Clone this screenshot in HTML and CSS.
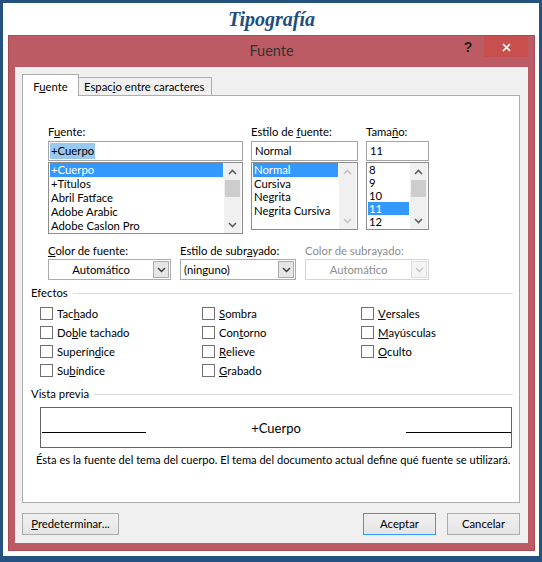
FILE: index.html
```html
<!DOCTYPE html>
<html lang="es">
<head>
<meta charset="utf-8">
<title>Tipografía</title>
<link rel="stylesheet" href="styles.css">
</head>
<body>
<div class="frame">
  <h1 class="page-title">Tipografía</h1>
  <div class="dialog">
    <div class="titlebar">
      <span></span>
      <span class="titlebar-text">Fuente</span>
      <div class="titlebar-ctrls">
        <span class="help">?</span>
        <span class="close"><svg width="9" height="9" viewBox="0 0 9 9"><path d="M1 1 L8 8 M8 1 L1 8" stroke="#fff" stroke-width="1.6" fill="none"/></svg></span>
      </div>
    </div>
    <div class="content">
      <div class="tabs">
        <div class="tab active">F<u>u</u>ente</div>
        <div class="tab">Espac<u>i</u>o entre caracteres</div>
      </div>
      <div class="panel">
        <div class="font-row">
          <div class="col col-font">
            <div class="label">F<u>u</u>ente:</div>
            <div class="input"><span class="sel">+Cuerpo</span></div>
            <div class="list list-font">
              <ul class="items">
                <li class="on">+Cuerpo</li>
                <li>+Títulos</li>
                <li>Abril Fatface</li>
                <li>Adobe Arabic</li>
                <li>Adobe Caslon Pro</li>
              </ul>
              <div class="scrollbar">
                <span class="arrow"><svg width="9" height="6" viewBox="0 0 9 6"><path d="M1 5 L4.5 1.5 L8 5" stroke="#606060" stroke-width="1.6" fill="none"/></svg></span>
                <span class="track"><span class="thumb"></span></span>
                <span class="arrow"><svg width="9" height="6" viewBox="0 0 9 6"><path d="M1 1 L4.5 4.5 L8 1" stroke="#606060" stroke-width="1.6" fill="none"/></svg></span>
              </div>
            </div>
          </div>
          <div class="col col-style">
            <div class="label">Estilo de <u>f</u>uente:</div>
            <div class="input"><span class="plain">Normal</span></div>
            <div class="list list-style">
              <ul class="items">
                <li class="on">Normal</li>
                <li>Cursiva</li>
                <li>Negrita</li>
                <li>Negrita Cursiva</li>
              </ul>
              <div class="scrollbar disabled">
                <span class="arrow"><svg width="9" height="6" viewBox="0 0 9 6"><path d="M1 5 L4.5 1.5 L8 5" stroke="#c4c4c4" stroke-width="1.6" fill="none"/></svg></span>
                <span class="track"></span>
                <span class="arrow"><svg width="9" height="6" viewBox="0 0 9 6"><path d="M1 1 L4.5 4.5 L8 1" stroke="#c4c4c4" stroke-width="1.6" fill="none"/></svg></span>
              </div>
            </div>
          </div>
          <div class="col col-size">
            <div class="label">Tama<u>ñ</u>o:</div>
            <div class="input"><span class="plain">11</span></div>
            <div class="list list-size">
              <ul class="items">
                <li>8</li>
                <li>9</li>
                <li>10</li>
                <li class="on">11</li>
                <li>12</li>
              </ul>
              <div class="scrollbar">
                <span class="arrow"><svg width="9" height="6" viewBox="0 0 9 6"><path d="M1 5 L4.5 1.5 L8 5" stroke="#606060" stroke-width="1.6" fill="none"/></svg></span>
                <span class="track"><span class="thumb"></span></span>
                <span class="arrow"><svg width="9" height="6" viewBox="0 0 9 6"><path d="M1 1 L4.5 4.5 L8 1" stroke="#606060" stroke-width="1.6" fill="none"/></svg></span>
              </div>
            </div>
          </div>
        </div>

        <div class="select-row">
          <div class="scol scol-1">
            <div class="label"><u>C</u>olor de fuente:</div>
            <div class="select"><span class="value center">Automático</span><span class="dbtn"><svg width="9" height="6" viewBox="0 0 9 6"><path d="M1 1 L4.5 4.5 L8 1" stroke="#404040" stroke-width="1.5" fill="none"/></svg></span></div>
          </div>
          <div class="scol scol-2">
            <div class="label">Estilo de subr<u>a</u>yado:</div>
            <div class="select"><span class="value">(ninguno)</span><span class="dbtn"><svg width="9" height="6" viewBox="0 0 9 6"><path d="M1 1 L4.5 4.5 L8 1" stroke="#404040" stroke-width="1.5" fill="none"/></svg></span></div>
          </div>
          <div class="scol scol-3">
            <div class="label disabled">Color de subrayado:</div>
            <div class="select disabled"><span class="value center">Automático</span><span class="dbtn"><svg width="9" height="6" viewBox="0 0 9 6"><path d="M1 1 L4.5 4.5 L8 1" stroke="#c4c4c4" stroke-width="1.5" fill="none"/></svg></span></div>
          </div>
        </div>

        <div class="group-head"><span>Efectos</span><span class="rule"></span></div>
        <div class="effects">
          <div class="check"><span class="box"></span>Tac<u>h</u>ado</div>
          <div class="check"><span class="box"></span>Do<u>b</u>le tachado</div>
          <div class="check"><span class="box"></span>Superín<u>d</u>ice</div>
          <div class="check"><span class="box"></span>Su<u>b</u>índice</div>
          <div class="check"><span class="box"></span><u>S</u>ombra</div>
          <div class="check"><span class="box"></span>Con<u>t</u>orno</div>
          <div class="check"><span class="box"></span><u>R</u>elieve</div>
          <div class="check"><span class="box"></span><u>G</u>rabado</div>
          <div class="check"><span class="box"></span><u>V</u>ersales</div>
          <div class="check"><span class="box"></span><u>M</u>ayúsculas</div>
          <div class="check"><span class="box"></span><u>O</u>culto</div>
        </div>

        <div class="group-head preview-head"><span>Vista previa</span><span class="rule"></span></div>
        <div class="preview">
          <span class="pline"></span>
          <span class="ptext">+Cuerpo</span>
          <span class="pline pline-r"></span>
        </div>
        <p class="caption">Ésta es la fuente del tema del cuerpo. El tema del documento actual define qué fuente se utilizará.</p>
      </div>

      <div class="buttons">
        <span class="button btn-pre"><u>P</u>redeterminar...</span>
        <span class="button btn-ok">Aceptar</span>
        <span class="button btn-cancel">Cancelar</span>
      </div>
    </div>
  </div>
</div>
</body>
</html>
```

FILE: styles.css
```css
* { box-sizing: border-box; }

html, body { margin: 0; padding: 0; }

body {
  width: 542px;
  height: 562px;
  border: 3px solid #245180;
  border-bottom-width: 6px;
  background: #ffffff;
  font-family: Lato, "Liberation Sans", sans-serif;
  font-size: 11.3px;
  color: #000000;
  overflow: hidden;
}

.frame {
  padding: 0 4px 0 5px;
}

.page-title {
  margin: 0;
  height: 32px;
  line-height: 32px;
  text-align: center;
  font-family: "Liberation Serif", serif;
  font-style: italic;
  font-weight: bold;
  font-size: 20px;
  color: #1f4e7d;
}

.dialog {
  background: #bd5b65;
  border: 1px solid #a94a54;
  padding: 0 6px 7px;
}

.titlebar {
  height: 31px;
  display: grid;
  grid-template-columns: 1fr auto 1fr;
  align-items: start;
}

.titlebar-text {
  line-height: 30px;
  font-size: 14.5px;
  color: #333333;
}

.titlebar-ctrls {
  display: flex;
  justify-content: flex-end;
  align-items: flex-start;
}

.help {
  width: 16px;
  margin-right: 8px;
  text-align: center;
  font-family: "Liberation Sans", sans-serif;
  font-weight: bold;
  font-size: 14px;
  line-height: 22px;
  color: #222222;
}

.close {
  width: 44px;
  height: 21px;
  background: #c7504f;
  display: flex;
  align-items: center;
  justify-content: center;
  padding-top: 1px;
}

.content {
  background: #f0f0f0;
  padding: 7px 8px 8px 7px;
}

u { text-decoration-thickness: 1px; text-underline-offset: 1px; }

/* tabs */
.tabs {
  display: flex;
  align-items: flex-end;
  height: 21px;
  position: relative;
  z-index: 1;
}

.tab {
  height: 18px;
  width: 133px;
  border: 1px solid #adadad;
  border-bottom: none;
  border-left: none;
  background: #f0f0f0;
  padding-left: 5px;
  line-height: 18px;
  white-space: nowrap;
}

.tab.active {
  height: 22px;
  width: 57px;
  margin-bottom: -1px;
  border-left: 1px solid #adadad;
  background: #ffffff;
  padding-left: 0;
  text-align: center;
  line-height: 23px;
}

.panel {
  height: 408px;
  background: #ffffff;
  border: 1px solid #adadad;
  padding-top: 29px;
}

.label {
  line-height: 14px;
  height: 14px;
  white-space: nowrap;
}

.label.disabled { color: #8d8d8d; }

/* font row */
.font-row {
  display: flex;
  gap: 8px;
  padding-left: 25px;
}

.col-font { width: 195px; }
.col-style { width: 107px; }
.col-size { width: 63px; }

.input {
  height: 20px;
  margin-top: 2px;
  border: 1px solid #a5a5a5;
  padding: 1px 1px 0;
  line-height: 16px;
  background: #fff;
}

.input .sel {
  display: inline-block;
  background: #99c9ef;
  padding: 0 1px;
}

.input .plain { padding-left: 2px; }

.list {
  margin-top: 1px;
  border: 1px solid #8c8c8c;
  display: flex;
  padding: 0 1px;
  background: #fff;
}

.list-font { height: 72px; }
.list-style { height: 68px; }
.list-size { height: 68px; }

.items {
  list-style: none;
  margin: 0 1px 0 0;
  padding: 0;
  flex: 1;
  overflow: hidden;
}

.items li {
  padding-left: 1px;
  white-space: nowrap;
}

.list-font .items li { line-height: 14px; height: 14px; }
.list-style .items li { line-height: 13.5px; height: 13.5px; }
.list-size .items li { line-height: 13px; height: 13px; }

.items li.on {
  background: #3399ff;
  color: #ffffff;
}

.scrollbar {
  width: 17px;
  background: #f0f0f0;
  display: flex;
  flex-direction: column;
}

.scrollbar .arrow {
  height: 17px;
  display: flex;
  align-items: center;
  justify-content: center;
}

.scrollbar .track {
  flex: 1;
  padding: 0 1px;
}

.scrollbar .thumb {
  display: block;
  height: 17px;
  background: #cdcdcd;
}

/* select row */
.select-row {
  display: flex;
  gap: 9px;
  padding-left: 25px;
  margin-top: 10px;
}

.scol-1 { width: 123px; }
.scol-2 { width: 116px; }
.scol-3 { width: 124px; }

.select {
  height: 21px;
  margin-top: 1px;
  border: 1px solid #acacac;
  background: #ffffff;
  display: flex;
}

.select .value {
  flex: 1;
  line-height: 19px;
  padding-left: 3px;
  white-space: nowrap;
}

.select .value.center {
  text-align: center;
  padding-left: 0;
}

.select .dbtn {
  width: 16px;
  margin: 1px 1px 1px 0;
  border: 1px solid #acacac;
  background: #e6e6e6;
  display: flex;
  align-items: center;
  justify-content: center;
}

.select.disabled {
  border-color: #d5d5d5;
  color: #8d8d8d;
}

.select.disabled .dbtn {
  border-color: #dedede;
  background: #f4f4f4;
}

/* groups */
.group-head {
  display: flex;
  align-items: center;
  margin-top: 6px;
  padding: 0 6px 0 8px;
  line-height: 14px;
  height: 14px;
}

.group-head .rule {
  flex: 1;
  height: 1px;
  background: #dcdcdc;
  margin-left: 5px;
}

.preview-head { margin-top: 7px; }

.effects {
  display: grid;
  grid-template-columns: 162px 159px 1fr;
  grid-template-rows: repeat(4, 19px);
  grid-auto-flow: column;
  padding-left: 17px;
  margin-top: 4px;
}

.check {
  display: flex;
  align-items: center;
  white-space: nowrap;
}

.check .box {
  width: 13px;
  height: 13px;
  border: 1px solid #707070;
  background: #ffffff;
  margin-right: 4px;
}

.preview {
  margin: 6px 7px 0 17px;
  height: 41px;
  border: 1px solid #646464;
  display: flex;
  align-items: flex-start;
  padding-left: 1px;
}

.pline {
  width: 104px;
  height: 1px;
  background: #000000;
  margin-top: 24px;
}

.pline-r { width: 105px; }

.ptext {
  flex: 1;
  text-align: center;
  font-size: 13px;
  line-height: 16px;
  margin-top: 12px;
}

.caption {
  margin: 5px 0 0;
  padding-left: 13px;
  font-size: 11.1px;
  line-height: 14px;
  white-space: nowrap;
}

/* buttons */
.buttons {
  display: flex;
  gap: 11px;
  margin-top: 10px;
}

.button {
  height: 22px;
  border: 1px solid #acacac;
  background: linear-gradient(#f0f0f0, #e5e5e5);
  text-align: center;
  line-height: 20px;
}

.btn-pre { width: 97px; margin-right: auto; }
.btn-ok { width: 73px; border-color: #3399ff; }
.btn-cancel { width: 73px; }
```
